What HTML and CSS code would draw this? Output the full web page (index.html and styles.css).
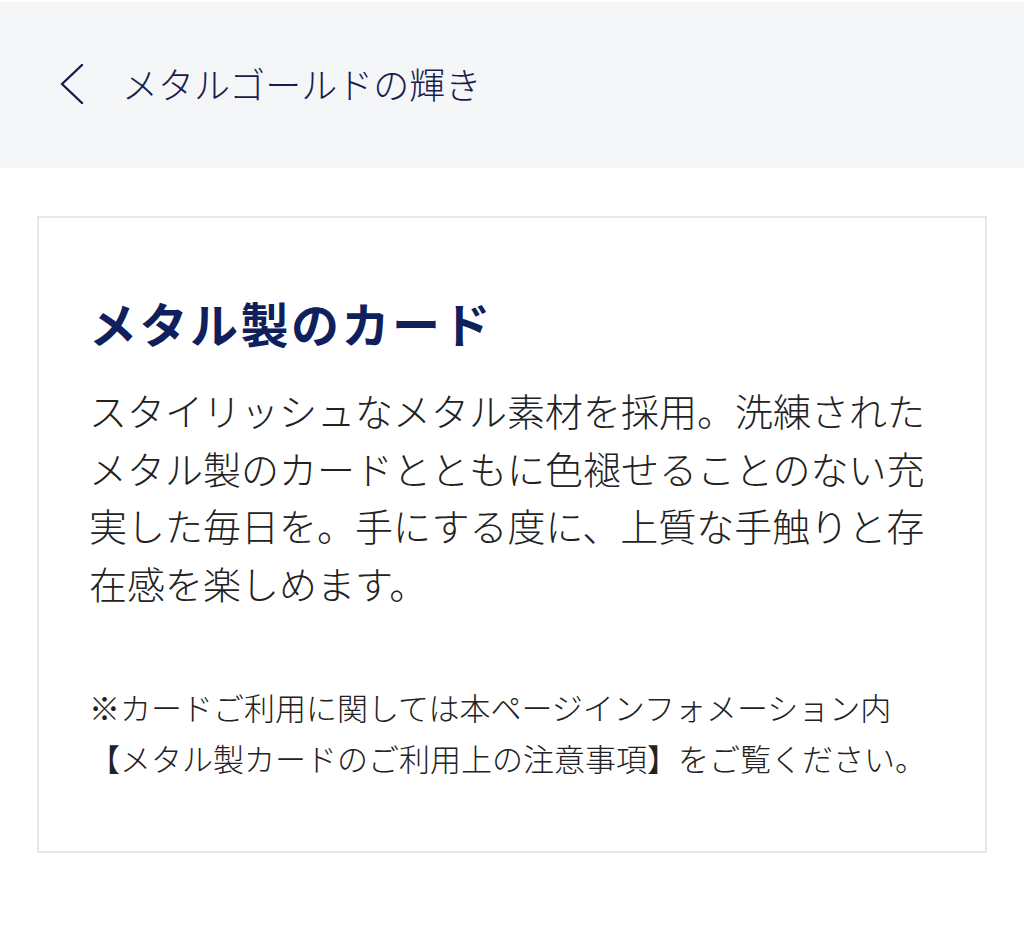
FILE: index.html
```html
<!DOCTYPE html>
<html lang="ja">

<head>
    <meta charset="UTF-8">
    <meta name="viewport" content="width=device-width, initial-scale=1.0">
    <link rel="stylesheet" href="styles.css">
    <title>メタルゴールドの輝き</title>
</head>

<body>
    <!-- Header -->
    <header class="page-header">
        <a class="back-link" href="#" aria-label="戻る">
            <svg width="26" height="40" viewBox="0 0 26 40">
                <polyline points="22,1 2,20 22,39" fill="none" stroke="currentColor" stroke-width="2.4" stroke-linecap="round" stroke-linejoin="round" />
            </svg>
        </a>
        <h1 class="page-title">メタルゴールドの輝き</h1>
    </header>

    <!-- Card -->
    <main class="content">
        <section class="info-card">
            <h2 class="card-title">メタル製のカード</h2>
            <p class="card-text">スタイリッシュなメタル素材を採用。洗練されたメタル製のカードとともに色褪せることのない充実した毎日を。手にする度に、上質な手触りと存在感を楽しめます。</p>
            <p class="card-note">※カードご利用に関しては本ページインフォメーション内<br>【メタル製カードのご利用上の注意事項】をご覧ください。</p>
        </section>
    </main>
</body>

</html>
```

FILE: styles.css
```css
body {
    font-family: "Noto Sans CJK JP", "Noto Sans", sans-serif;
    margin: 0;
    padding: 0;
    background-color: #fff;
    color: #222;
}

.page-header {
    display: flex;
    align-items: center;
    height: 166px;
    padding-left: 60px;
    border-top: 2px solid #fff;
    background-color: #f5f6f8;
    color: #171c4f;
}

.back-link {
    display: flex;
    color: #171c4f;
    margin-right: 36px;
    margin-bottom: 2px;
}

.page-title {
    margin: 0;
    font-size: 36px;
    font-weight: 300;
    line-height: 1.4;
    margin-bottom: 4px;
}

.content {
    padding: 48px 37px 60px;
}

.info-card {
    border: 2px solid #e8e8e8;
    padding: 68px 50px 68px;
}

.card-title {
    margin: 0;
    font-size: 48px;
    font-weight: 700;
    line-height: 72px;
    letter-spacing: 2.5px;
    color: #10205c;
}

.card-text {
    margin: 23px 0 0;
    font-size: 38px;
    font-weight: 300;
    line-height: 57.5px;
    color: #222;
}

.card-note {
    margin: 70px 0 0;
    font-size: 31px;
    font-weight: 300;
    line-height: 51px;
    white-space: nowrap;
    color: #222;
}
```
